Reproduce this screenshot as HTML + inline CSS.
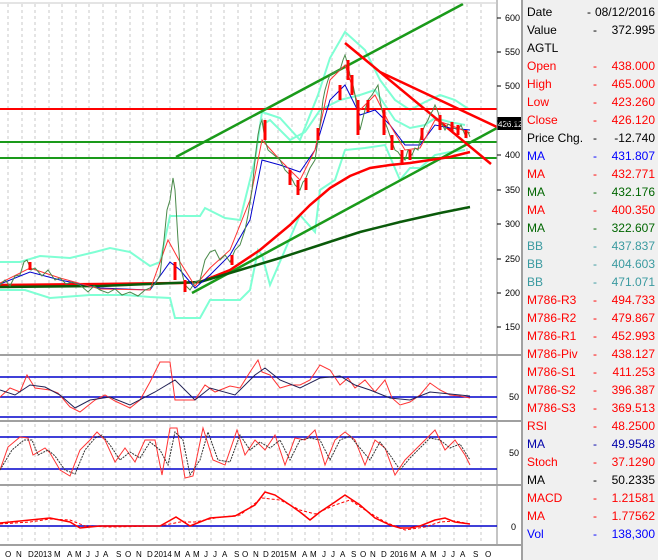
<!DOCTYPE html>
<html><head><meta charset="utf-8"><style>
html,body{margin:0;padding:0;width:658px;height:560px;overflow:hidden;background:#fff;font-family:"Liberation Sans",sans-serif}
#info{position:absolute;left:521px;top:0;width:137px;height:560px;background:#f0f0f0;border-left:2px solid #a0a0a0;box-sizing:border-box}
.r{position:absolute;left:4px;width:130px;height:18px;font-size:12px;line-height:18px}
.r .d{position:absolute;left:66px}
.r .v{position:absolute;right:2px}
</style></head><body>
<svg width="521" height="560" style="position:absolute;left:0;top:0" xmlns="http://www.w3.org/2000/svg">
<rect width="521" height="560" fill="#fff"/>
<g stroke="#c8c8c8" stroke-dasharray="3,3" stroke-width="1">
<line x1="8" y1="4" x2="8" y2="545"/><line x1="22" y1="4" x2="22" y2="545"/><line x1="35" y1="4" x2="35" y2="545"/><line x1="49" y1="4" x2="49" y2="545"/><line x1="62" y1="4" x2="62" y2="545"/><line x1="76" y1="4" x2="76" y2="545"/><line x1="89" y1="4" x2="89" y2="545"/><line x1="103" y1="4" x2="103" y2="545"/><line x1="116" y1="4" x2="116" y2="545"/><line x1="130" y1="4" x2="130" y2="545"/><line x1="143" y1="4" x2="143" y2="545"/><line x1="157" y1="4" x2="157" y2="545"/><line x1="170" y1="4" x2="170" y2="545"/><line x1="184" y1="4" x2="184" y2="545"/><line x1="197" y1="4" x2="197" y2="545"/><line x1="211" y1="4" x2="211" y2="545"/><line x1="224" y1="4" x2="224" y2="545"/><line x1="238" y1="4" x2="238" y2="545"/><line x1="251" y1="4" x2="251" y2="545"/><line x1="265" y1="4" x2="265" y2="545"/><line x1="278" y1="4" x2="278" y2="545"/><line x1="292" y1="4" x2="292" y2="545"/><line x1="305" y1="4" x2="305" y2="545"/><line x1="319" y1="4" x2="319" y2="545"/><line x1="332" y1="4" x2="332" y2="545"/><line x1="346" y1="4" x2="346" y2="545"/><line x1="359" y1="4" x2="359" y2="545"/><line x1="373" y1="4" x2="373" y2="545"/><line x1="386" y1="4" x2="386" y2="545"/><line x1="400" y1="4" x2="400" y2="545"/><line x1="413" y1="4" x2="413" y2="545"/><line x1="427" y1="4" x2="427" y2="545"/><line x1="440" y1="4" x2="440" y2="545"/><line x1="454" y1="4" x2="454" y2="545"/><line x1="467" y1="4" x2="467" y2="545"/><line x1="481" y1="4" x2="481" y2="545"/>
</g>
<g fill="none" stroke="#7fffd4" stroke-width="2">
<polyline points="0,262 20,262 40,256 70,258 95,252 110,248 130,252 150,266 160,262 170,216 200,216 205,208 225,218 240,220 255,160 262,112 280,118 300,140 318,95 330,58 345,32 365,50 380,80 395,100 410,110 425,102 440,95 455,100 470,110"/>
<polyline points="0,290 25,290 50,298 90,295 125,295 150,297 170,298 175,318 200,318 210,300 240,300 250,290 258,250 262,255 270,285 285,250 300,215 315,232 320,190 335,180 345,150 365,148 385,145 400,180 410,168 420,168 435,155 450,152 465,150"/>
<polyline points="262,125 270,120 290,140 305,132 320,110 340,100 360,95 375,90 395,120 410,128 425,125 435,118 450,122 465,125"/>
</g>
<line x1="0" y1="109" x2="497" y2="109" stroke="#f00" stroke-width="2"/>
<line x1="0" y1="142" x2="497" y2="142" stroke="#1a9a1a" stroke-width="2"/>
<line x1="0" y1="158" x2="497" y2="158" stroke="#1a9a1a" stroke-width="2"/>
<g stroke-width="2.5">
<line x1="176" y1="157" x2="463" y2="4" stroke="#1a9a1a"/>
<line x1="192" y1="293" x2="497" y2="128" stroke="#1a9a1a"/>
<line x1="345" y1="43" x2="491" y2="164" stroke="#f00"/>
<line x1="380" y1="72" x2="497" y2="127" stroke="#f00"/>
</g>
<polyline fill="none" stroke="#f00" stroke-width="2.5" points="0,285 100,284 180,283 200,282 230,270 260,250 290,225 310,205 330,188 350,176 370,168 390,165 410,163 430,160 450,157 470,152"/>
<polyline fill="none" stroke="#0a5a0a" stroke-width="2.5" points="0,287 100,286 200,282 240,270 280,258 320,245 360,232 400,222 440,213 470,207"/>
<polyline fill="none" stroke="#00c" stroke-width="1" points="0,284 30,272 60,280 100,288 150,290 170,262 180,270 195,288 210,275 230,255 250,220 262,160 280,165 300,172 315,150 330,100 345,85 360,115 375,110 390,125 405,145 420,145 435,125 450,128 470,130"/>
<polyline fill="none" stroke="#f33" stroke-width="1" points="0,283 30,268 60,278 100,289 150,290 168,240 180,262 195,286 210,268 230,250 250,200 262,140 280,160 300,180 315,150 330,80 345,65 360,110 375,95 390,125 405,150 420,148 435,120 450,125 470,133"/>
<polyline fill="none" stroke="#4a8a4a" stroke-width="1" points="0,285 5,280 10,286 15,276 20,275 24,262 27,260 31,270 35,268 42,276 48,270 55,280 60,278 66,284 72,282 80,285 88,292 94,286 100,290 108,293 115,289 122,295 130,292 138,296 145,290 150,288 155,284 160,275 164,240 167,210 170,200 173,178 175,190 178,240 180,265 185,285 190,290 195,282 200,280 203,268 205,260 210,252 215,250 220,260 225,255 230,262 235,250 240,245 245,230 248,215 252,190 255,160 258,135 260,125 262,120 265,140 268,150 274,155 280,160 285,170 290,175 295,185 300,190 303,182 305,180 310,168 315,160 318,140 320,125 323,100 325,90 328,80 330,75 335,72 340,70 343,60 345,55 348,65 350,75 353,85 355,95 358,115 360,130 363,118 365,110 368,100 372,95 375,90 378,85 380,100 382,110 385,122 388,130 392,142 395,150 398,152 400,155 403,158 405,160 408,150 412,155 415,148 418,150 421,135 425,125 428,120 430,115 433,110 435,105 438,112 440,120 443,126 445,130 448,124 450,125 454,128 458,130 461,125 465,135 468,132 470,137"/>
<g stroke="#f00" stroke-width="3">
<line x1="265" y1="120" x2="265" y2="140"/><line x1="290" y1="170" x2="290" y2="185"/><line x1="298" y1="180" x2="298" y2="195"/><line x1="318" y1="128" x2="318" y2="140"/><line x1="348" y1="60" x2="348" y2="80"/><line x1="352" y1="75" x2="352" y2="95"/><line x1="358" y1="100" x2="358" y2="135"/><line x1="368" y1="100" x2="368" y2="112"/><line x1="384" y1="110" x2="384" y2="135"/><line x1="392" y1="135" x2="392" y2="150"/><line x1="402" y1="150" x2="402" y2="165"/><line x1="440" y1="115" x2="440" y2="130"/><line x1="452" y1="122" x2="452" y2="132"/><line x1="466" y1="130" x2="466" y2="138"/><line x1="175" y1="262" x2="175" y2="280"/><line x1="185" y1="280" x2="185" y2="292"/><line x1="30" y1="262" x2="30" y2="270"/>
<line x1="340" y1="85" x2="340" y2="100"/><line x1="410" y1="150" x2="410" y2="160"/><line x1="422" y1="128" x2="422" y2="140"/><line x1="458" y1="125" x2="458" y2="135"/><line x1="306" y1="178" x2="306" y2="190"/><line x1="232" y1="255" x2="232" y2="265"/>
</g>
<rect x="497" y="117" width="24" height="13" fill="#000"/>
<text x="498" y="127" fill="#fff" font-size="8" font-family="Liberation Sans">426.120</text>
<line x1="497" y1="0" x2="497" y2="546" stroke="#888"/>
<g font-size="9" font-family="Liberation Sans" fill="#000">
<text x="505" y="21">600</text><text x="505" y="55">550</text><text x="505" y="89">500</text><text x="505" y="124">450</text><text x="505" y="158">400</text><text x="505" y="193">350</text><text x="505" y="227">300</text><text x="505" y="262">250</text><text x="505" y="296">200</text><text x="505" y="330">150</text>
<text x="509" y="400">50</text><text x="509" y="456">50</text><text x="511" y="530">0</text>
</g>
<g stroke="#000"><line x1="497" y1="18" x2="501" y2="18"/><line x1="497" y1="52" x2="501" y2="52"/><line x1="497" y1="86" x2="501" y2="86"/><line x1="497" y1="121" x2="501" y2="121"/><line x1="497" y1="155" x2="501" y2="155"/><line x1="497" y1="190" x2="501" y2="190"/><line x1="497" y1="224" x2="501" y2="224"/><line x1="497" y1="259" x2="501" y2="259"/><line x1="497" y1="293" x2="501" y2="293"/><line x1="497" y1="327" x2="501" y2="327"/></g>
<g fill="#a0a0a0"><rect x="0" y="354" width="521" height="2"/><rect x="0" y="420" width="521" height="2"/><rect x="0" y="484" width="521" height="2"/><rect x="0" y="544" width="521" height="2"/></g>
<line x1="0" y1="3" x2="497" y2="3" stroke="#c8c8c8"/>
<g stroke="#00c" stroke-width="1.5"><line x1="0" y1="377" x2="497" y2="377"/><line x1="0" y1="397" x2="497" y2="397"/><line x1="0" y1="417" x2="497" y2="417"/>
<line x1="0" y1="437" x2="497" y2="437"/><line x1="0" y1="469" x2="497" y2="469"/><line x1="0" y1="526" x2="497" y2="526"/></g>
<polyline fill="none" stroke="#f33" points="0,397 10,388 20,392 27,375 35,388 50,390 58,393 70,407 80,412 95,400 105,395 115,401 130,408 140,400 150,382 160,362 170,362 175,400 195,400 205,385 215,392 230,386 240,388 250,372 258,360 262,372 270,375 280,388 290,385 300,385 310,380 320,365 330,370 340,385 348,378 355,388 365,380 375,392 385,380 392,398 400,405 410,402 420,395 430,383 440,390 450,395 460,396 470,398"/>
<polyline fill="none" stroke="#225" points="0,390 15,395 30,385 45,387 60,395 75,408 90,400 110,397 130,405 155,392 175,380 195,400 210,388 235,395 255,375 265,368 280,380 300,388 320,378 340,376 355,385 370,390 390,398 410,400 430,392 450,394 470,396"/>
<polyline fill="none" stroke="#f33" points="0,470 8,447 20,437 28,438 33,455 45,448 50,453 60,470 70,476 80,450 90,440 97,432 105,440 115,462 125,448 135,462 145,440 155,440 162,475 170,428 177,428 185,478 193,476 203,428 213,460 225,465 237,430 245,455 255,440 265,450 275,435 285,465 295,438 305,440 315,430 325,465 335,440 345,432 355,440 365,465 375,440 385,448 395,475 405,460 415,450 425,440 435,430 445,450 455,440 465,455 470,465"/>
<polyline fill="none" stroke="#333" stroke-dasharray="2,1" points="0,470 12,450 24,440 32,440 38,455 48,450 55,456 65,470 75,474 85,450 95,438 102,435 110,445 120,460 130,452 140,458 150,442 160,450 168,465 175,432 183,440 190,475 200,460 208,432 218,460 230,462 240,435 250,450 260,442 270,448 280,440 290,460 300,440 310,438 320,440 330,460 340,440 350,436 360,448 370,460 380,442 390,455 400,470 410,458 420,448 430,438 440,440 450,448 460,444 470,460"/>
<polyline fill="none" stroke="#f00" stroke-width="1.5" points="0,523 30,520 50,518 70,522 80,528 100,526 140,526 160,526 176,517 190,526 210,518 235,516 255,505 265,492 275,495 290,505 300,512 310,520 320,512 335,502 345,495 360,505 375,518 390,525 400,528 410,528 420,526 435,520 445,518 455,522 470,524"/>
<polyline fill="none" stroke="#f00" stroke-dasharray="3,2" points="0,524 30,522 50,519 70,520 85,526 110,527 160,526 180,522 195,522 215,518 240,515 262,498 280,500 300,510 315,514 335,505 350,500 365,510 385,522 405,530 425,527 440,522 455,521 470,524"/>
<g font-size="8" font-family="Liberation Sans" fill="#000">
<text x="5" y="557">O</text><text x="16" y="557">N</text><text x="28" y="557">D</text><text x="34" y="557">2013</text><text x="54" y="557">M</text><text x="67" y="557">A</text><text x="75" y="557">M</text><text x="86" y="557">J</text><text x="95" y="557">J</text><text x="103" y="557">A</text><text x="116" y="557">S</text><text x="125" y="557">O</text><text x="136" y="557">N</text><text x="147" y="557">D</text><text x="154" y="557">2014</text><text x="174" y="557">M</text><text x="185" y="557">A</text><text x="193" y="557">M</text><text x="204" y="557">J</text><text x="213" y="557">J</text><text x="222" y="557">A</text><text x="234" y="557">S</text><text x="242" y="557">O</text><text x="253" y="557">N</text><text x="263" y="557">D</text><text x="271" y="557">2015</text><text x="290" y="557">M</text><text x="302" y="557">A</text><text x="310" y="557">M</text><text x="322" y="557">J</text><text x="331" y="557">J</text><text x="340" y="557">A</text><text x="351" y="557">S</text><text x="360" y="557">O</text><text x="370" y="557">N</text><text x="381" y="557">D</text><text x="390" y="557">2016</text><text x="410" y="557">M</text><text x="421" y="557">A</text><text x="430" y="557">M</text><text x="442" y="557">J</text><text x="451" y="557">J</text><text x="460" y="557">A</text><text x="473" y="557">S</text><text x="485" y="557">O</text>
</g>
</svg>
<div id="info">
<div class="r" style="top:3px;color:#000">Date<span class="d" style="left:60px">-</span><span class="v">08/12/2016</span></div>
<div class="r" style="top:21px;color:#000">Value<span class="d">-</span><span class="v">372.995</span></div>
<div class="r" style="top:39px;color:#000">AGTL</div>
<div class="r" style="top:57px;color:#f00">Open<span class="d">-</span><span class="v">438.000</span></div>
<div class="r" style="top:75px;color:#f00">High<span class="d">-</span><span class="v">465.000</span></div>
<div class="r" style="top:93px;color:#f00">Low<span class="d">-</span><span class="v">423.260</span></div>
<div class="r" style="top:111px;color:#f00">Close<span class="d">-</span><span class="v">426.120</span></div>
<div class="r" style="top:129px;color:#000">Price Chg.<span class="d">-</span><span class="v">-12.740</span></div>
<div class="r" style="top:147px;color:#00f">MA<span class="d">-</span><span class="v">431.807</span></div>
<div class="r" style="top:165px;color:#f00">MA<span class="d">-</span><span class="v">432.771</span></div>
<div class="r" style="top:183px;color:#060">MA<span class="d">-</span><span class="v">432.176</span></div>
<div class="r" style="top:201px;color:#f00">MA<span class="d">-</span><span class="v">400.350</span></div>
<div class="r" style="top:219px;color:#060">MA<span class="d">-</span><span class="v">322.607</span></div>
<div class="r" style="top:237px;color:#3a9aa0">BB<span class="d">-</span><span class="v">437.837</span></div>
<div class="r" style="top:255px;color:#3a9aa0">BB<span class="d">-</span><span class="v">404.603</span></div>
<div class="r" style="top:273px;color:#3a9aa0">BB<span class="d">-</span><span class="v">471.071</span></div>
<div class="r" style="top:291px;color:#f00">M786-R3<span class="d">-</span><span class="v">494.733</span></div>
<div class="r" style="top:309px;color:#f00">M786-R2<span class="d">-</span><span class="v">479.867</span></div>
<div class="r" style="top:327px;color:#f00">M786-R1<span class="d">-</span><span class="v">452.993</span></div>
<div class="r" style="top:345px;color:#f00">M786-Piv<span class="d">-</span><span class="v">438.127</span></div>
<div class="r" style="top:363px;color:#f00">M786-S1<span class="d">-</span><span class="v">411.253</span></div>
<div class="r" style="top:381px;color:#f00">M786-S2<span class="d">-</span><span class="v">396.387</span></div>
<div class="r" style="top:399px;color:#f00">M786-S3<span class="d">-</span><span class="v">369.513</span></div>
<div class="r" style="top:417px;color:#f00">RSI<span class="d">-</span><span class="v">48.2500</span></div>
<div class="r" style="top:435px;color:#00a">MA<span class="d">-</span><span class="v">49.9548</span></div>
<div class="r" style="top:453px;color:#f00">Stoch<span class="d">-</span><span class="v">37.1290</span></div>
<div class="r" style="top:471px;color:#000">MA<span class="d">-</span><span class="v">50.2335</span></div>
<div class="r" style="top:489px;color:#f00">MACD<span class="d">-</span><span class="v">1.21581</span></div>
<div class="r" style="top:507px;color:#f00">MA<span class="d">-</span><span class="v">1.77562</span></div>
<div class="r" style="top:525px;color:#00f">Vol<span class="d">-</span><span class="v">138,300</span></div>
</div>
</body></html>
